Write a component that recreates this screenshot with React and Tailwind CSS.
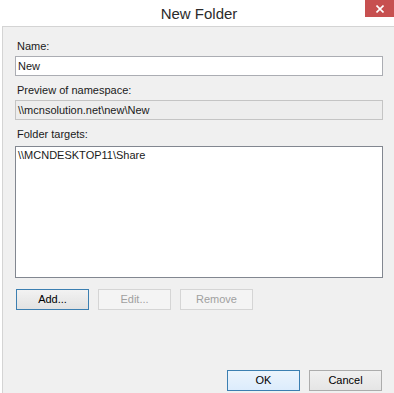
import React, { useState } from 'react';

const font = { fontFamily: '"Liberation Sans", Arial, sans-serif' };

const Btn = ({ children, variant = 'normal', className = '' }) => {
  const styles = {
    focus: 'border-[#3c7fb1] bg-gradient-to-b from-[#f2f2f2] to-[#e2e2e2] text-black',
    normal: 'border-[#acacac] bg-gradient-to-b from-[#f0f0f0] to-[#e5e5e5] text-black',
    default: 'border-[#3c7fb1] bg-gradient-to-b from-[#ecf4fc] to-[#dcecfc] text-black',
    disabled: 'border-[#d5d5d5] bg-[#f4f4f4] text-[#a0a0a0]',
  };
  return (
    <button className={`w-[73px] h-[21px] border text-[11px] leading-none flex items-center justify-center ${styles[variant]} ${className}`}>
      {children}
    </button>
  );
};

export default function App() {
  const [name, setName] = useState('New');

  return (
    <div className="w-[394px] h-[393px] bg-white flex flex-col overflow-hidden" style={font}>
      {/* title bar */}
      <div className="relative h-[26px] shrink-0 flex items-center justify-center pl-[4px]">
        <span className="text-[15px] text-[#2b2b2b] leading-none">New Folder</span>
        <div className="absolute top-0 right-0 w-[29px] h-[17px] bg-[#c75050] flex items-center justify-center">
          <svg width="8" height="8" viewBox="0 0 8 8">
            <path d="M0.5 0.5 L7.5 7.5 M7.5 0.5 L0.5 7.5" stroke="white" strokeWidth="1.6" />
          </svg>
        </div>
      </div>

      {/* body */}
      <div className="flex-1 ml-[2px] bg-[#f0f0f0] border-t border-l border-[#d4d4d4] flex flex-col pl-[12px] pr-[10px] text-[11px] text-[#1a1a1a]">
        <div className="mt-[13px] h-[13px] leading-[13px] pl-[2px]">Name:</div>
        <input
          value={name}
          onChange={(e) => setName(e.target.value)}
          className="mt-[3px] w-[368px] h-[20px] border border-[#abadb3] bg-white px-[2px] text-[11px] text-[#1a1a1a] outline-none"
          style={font}
        />
        <div className="mt-[8px] h-[13px] leading-[13px] pl-[2px]">Preview of namespace:</div>
        <div className="mt-[3px] w-[368px] h-[20px] border border-[#c4c4c4] bg-[#ededed] px-[2px] flex items-center">
          \\mcnsolution.net\new\New
        </div>
        <div className="mt-[8px] h-[13px] leading-[13px] pl-[2px]">Folder targets:</div>
        <div className="mt-[5px] w-[368px] h-[132px] border border-[#828790] bg-white px-[2px] pt-[2px]">
          <div className="leading-[13px]">\\MCNDESKTOP11\Share</div>
        </div>
        <div className="mt-[11px] flex gap-[9px] pl-[1px]">
          <Btn variant="focus">Add...</Btn>
          <Btn variant="disabled">Edit...</Btn>
          <Btn variant="disabled">Remove</Btn>
        </div>
        <div className="mt-auto mb-[2px] flex justify-end gap-[9px] pr-[1px] mr-[1px]">
          <Btn variant="default">OK</Btn>
          <Btn>Cancel</Btn>
        </div>
      </div>
    </div>
  );
}
